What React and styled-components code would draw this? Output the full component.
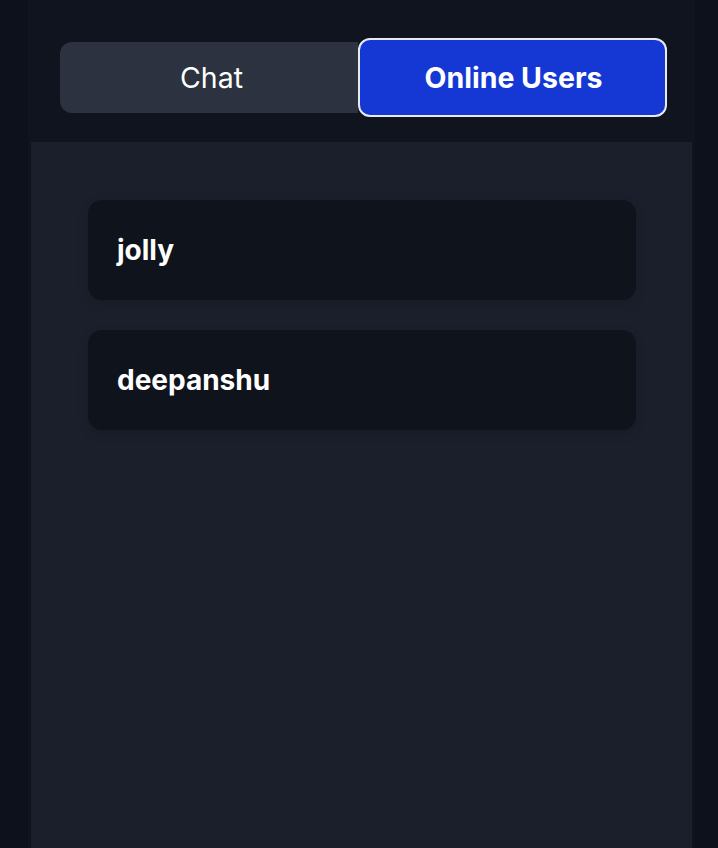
import React from "react";
import styled, { createGlobalStyle } from "styled-components";

const Global = createGlobalStyle`
  html, body { margin: 0; padding: 0; background: #0d111b; }
  body { font-family: Inter, "Noto Sans", sans-serif; -webkit-font-smoothing: antialiased; }
  * { box-sizing: border-box; }
`;

const Shell = styled.div`
  margin: 0 23px 0 28px;
  min-height: 848px;
  background: #10141e;
  padding-top: 38px;
  display: flex;
  flex-direction: column;
`;

const Tabs = styled.div`
  display: flex;
  align-items: center;
  height: 79px;
  padding-left: 32px;
`;

const Tab = styled.button`
  font-family: Inter, "Noto Sans", sans-serif;
  color: #ffffff;
  cursor: pointer;
  display: flex;
  align-items: center;
  justify-content: center;
  font-size: 28.5px;
  font-weight: ${(p) => (p.$active ? 700 : 400)};
  width: ${(p) => (p.$active ? "309px" : "298px")};
  height: ${(p) => (p.$active ? "79px" : "71px")};
  background: ${(p) => (p.$active ? "#1538d4" : "#2c3240")};
  border-radius: ${(p) => (p.$active ? "12px" : "12px 0 0 12px")};
  border: ${(p) => (p.$active ? "2px solid #e8ebf2" : "none")};
  padding: 0 0 0 ${(p) => (p.$active ? "2px" : "5px")};
`;

const Panel = styled.div`
  margin: 25px 3px 0 3px;
  flex: 1;
  background: #1a1f2b;
  padding: 58px 56px 40px 57px;
  display: flex;
  flex-direction: column;
  gap: 30px;
`;

const UserCard = styled.div`
  height: 100px;
  background: #0f131c;
  border-radius: 14px;
  display: flex;
  align-items: center;
  padding-left: 29px;
  color: #ffffff;
  font-size: 28px;
  font-weight: 700;
  box-shadow: 0 4px 12px rgba(0, 0, 0, 0.12);
`;

const users = ["jolly", "deepanshu"];

export default function App() {
  return (
    <>
      <Global />
      <Shell>
        <Tabs>
          <Tab>Chat</Tab>
          <Tab $active>Online Users</Tab>
        </Tabs>
        <Panel>
          {users.map((u) => (
            <UserCard key={u}>{u}</UserCard>
          ))}
        </Panel>
      </Shell>
    </>
  );
}
